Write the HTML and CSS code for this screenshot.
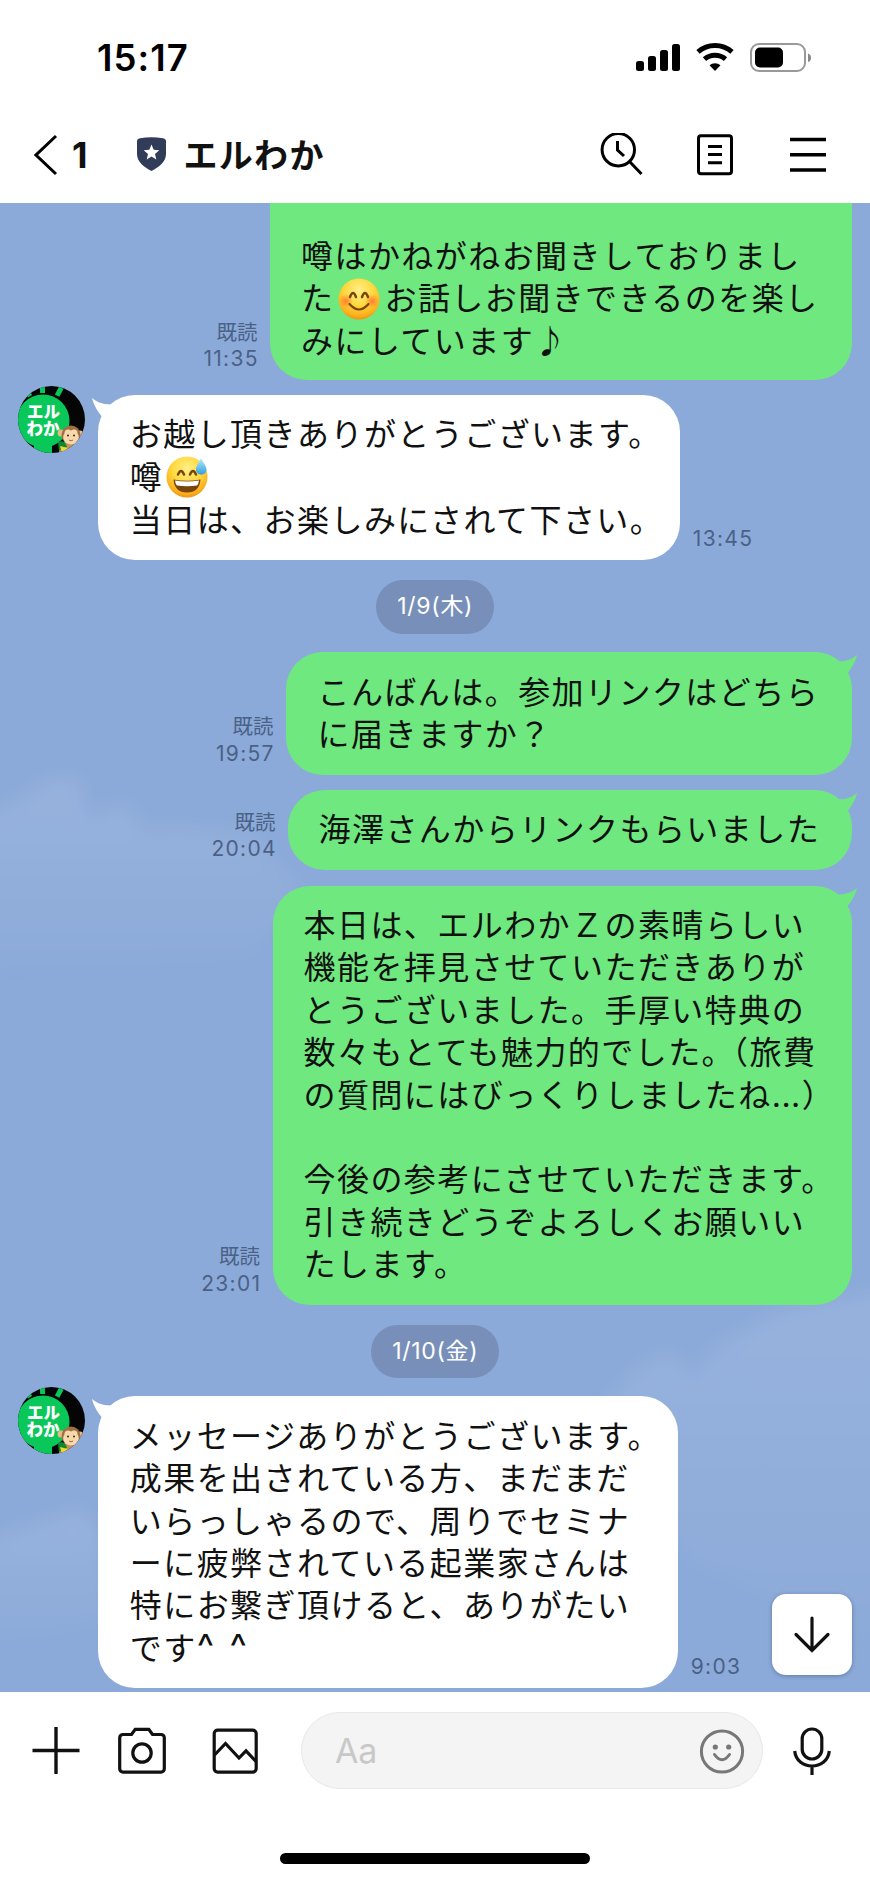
FILE: index.html
```html
<!DOCTYPE html>
<html lang="ja">
<head>
<meta charset="utf-8">
<title>エルわか</title>
<link rel="stylesheet" href="styles.css">
</head>
<body>
<svg class="defs" width="0" height="0" aria-hidden="true">
  <defs>
    <radialGradient id="face" cx="50%" cy="30%" r="72%">
      <stop offset="0" stop-color="#fff08a"/><stop offset=".5" stop-color="#ffd83e"/><stop offset=".85" stop-color="#fbae1c"/><stop offset="1" stop-color="#ee8d12"/>
    </radialGradient>
    <radialGradient id="blush"><stop offset="0" stop-color="#ff6a2c" stop-opacity=".8"/><stop offset="1" stop-color="#ff6a2c" stop-opacity="0"/></radialGradient>
    <linearGradient id="drop" x1="0" y1="0" x2="0" y2="1"><stop offset="0" stop-color="#b9ebff"/><stop offset="1" stop-color="#2f9fe0"/></linearGradient>
    <clipPath id="disc"><circle cx="33.5" cy="33.5" r="33.5"/></clipPath>
    <symbol id="avatar" viewBox="0 0 67 67">
      <g clip-path="url(#disc)">
        <rect width="67" height="67" fill="#050505"/>
        <g fill="#0ac75a">
          <rect x="22" y="-2" width="5" height="9" transform="rotate(-2 24 4)"/>
          <rect x="39" y="1" width="5" height="9" transform="rotate(28 41 5)"/>
          <rect x="8" y="4" width="5" height="7" transform="rotate(-32 10 8)"/>
          <rect x="16" y="56" width="18" height="12"/>
          <circle cx="25" cy="35" r="26.5"/>
        </g>
        <text class="avatar-text" x="9" y="31.500">エル</text>
        <text class="avatar-text" x="8.500" y="48.500">わか</text>
        <ellipse cx="51" cy="64" rx="10" ry="9" fill="#c99255"/>
        <circle cx="43" cy="47" r="3.500" fill="#e8b887"/>
        <circle cx="62" cy="48" r="3.500" fill="#e8b887"/>
        <circle cx="53" cy="49" r="9.500" fill="#a06f42"/>
        <ellipse cx="53" cy="51.500" rx="7.800" ry="7" fill="#f7d9ae"/>
        <circle cx="50" cy="47" r="3.500" fill="#f7d9ae"/><circle cx="56" cy="47" r="3.500" fill="#f7d9ae"/>
        <circle cx="50" cy="49.500" r="1" fill="#42261a"/><circle cx="56" cy="49.500" r="1" fill="#42261a"/>
        <path d="M51 54q2 1.600 4 0" fill="none" stroke="#b0603c"/>
        <path d="M40 56q7-3 9 5l-8 4z" fill="#0b8a34"/>
        <path d="M42 60l8 2-6 5z" fill="#f1d928"/>
      </g>
    </symbol>
    <symbol id="tail" viewBox="0 0 24 22">
      <path d="M0 1C6 6.500 13 7.500 22 7.500L24 22H12C6 15 2 9 0 1z"/>
    </symbol>
  </defs>
</svg>

<header class="top">
  <div class="status">
    <span class="clock">15:17</span>
    <svg class="status-icons" width="176" height="32" viewBox="0 0 176 32">
      <rect x="1" y="19" width="8" height="10" rx="2.500"/><rect x="13" y="14" width="8" height="15" rx="2.500"/><rect x="25" y="8" width="8" height="21" rx="2.500"/><rect x="37" y="2" width="8" height="27" rx="2.500"/>
      <path d="M63 9.800a26 26 0 0 1 34 0" fill="none" stroke="#000" stroke-width="5"/>
      <path d="M69.500 17.200a16 16 0 0 1 21 0" fill="none" stroke="#000" stroke-width="5"/>
      <path d="M74.500 23.200a8.500 8.500 0 0 1 11 0L80 29z"/>
      <rect x="116" y="2" width="54" height="27" rx="8" fill="#fff" stroke="#999" stroke-width="2"/>
      <rect x="120" y="5.500" width="28" height="20" rx="5"/>
      <path d="M173 11.500q3 1 3 4.300t-3 4.300z" fill="#888"/>
    </svg>
  </div>
  <nav class="bar">
    <svg class="back" width="24" height="42" viewBox="0 0 24 42"><path d="M22 2L2 21l20 19" fill="none" stroke="#000" stroke-width="3"/></svg>
    <span class="count">1</span>
    <svg class="shield" width="29" height="34" viewBox="0 0 29 34"><path d="M3 1.300Q14.500-.8 26 1.300q3 .5 3 3V17c0 8-7 13-14.500 17C7 30 0 25 0 17V4.300q0-2.500 3-3z" fill="#313c58"/><path d="M14.500 7.500l2.200 5.200 5.600.5-4.300 3.700 1.300 5.500-4.800-2.900-4.800 2.900 1.300-5.500-4.300-3.700 5.600-.5z" fill="#fff"/></svg>
    <h1 class="title">エルわか</h1>
    <svg class="act" width="44" height="44" viewBox="0 0 44 44"><circle cx="19.300" cy="16.700" r="16.200"/><path d="M18.500 8v9l6.500 6M30.500 28.500l12 12.500"/></svg>
    <svg class="act" width="44" height="44" viewBox="0 0 44 44"><rect x="5.500" y="2.700" width="33" height="38" rx="2.500"/><path d="M15 13.600h14M15 21.600h14M15 29.700h14"/></svg>
    <svg class="act" width="44" height="44" viewBox="0 0 44 44"><path d="M4 6.500h36M4 21.700h36M4 37h36" stroke-width="3.400"/></svg>
  </nav>
</header>

<main class="chat">
  <svg class="sky" width="870" height="1489" viewBox="0 203 870 1489" aria-hidden="true">
    <defs>
      <filter id="soft" x="-20%" y="-20%" width="140%" height="140%"><feGaussianBlur stdDeviation="9"/></filter>
      <linearGradient id="c1" x1="0" y1="0" x2="0" y2="1"><stop offset="0" stop-color="#fff" stop-opacity=".095"/><stop offset="1" stop-color="#fff" stop-opacity="0"/></linearGradient>
    </defs>
    <g fill="url(#c1)" filter="url(#soft)">
      <path d="M-30 820L20 800 50 780 78 780 90 818 125 804 145 830 180 828 250 835 300 890 250 960-30 980z"/>
      <path d="M900 1290L780 1312 720 1345 690 1375 670 1352 635 1370 600 1410 640 1480 690 1560 900 1660z"/>
      <path d="M-30 1545L50 1520 80 1510 100 1530 110 1620-30 1650z"/>
    </g>
  </svg>

  <div class="row out first">
    <div class="meta">既読<br><span class="time">11:35</span></div>
    <div class="bubble w-a">噂はかねがねお聞きしておりまし<br>た<svg class="emoji" width="42" height="42" viewBox="0 0 42 42"><circle cx="21" cy="21" r="20.500" fill="url(#face)"/><circle cx="8" cy="23" r="7" fill="url(#blush)"/><circle cx="34" cy="23" r="7" fill="url(#blush)"/><g fill="none" stroke="#7a4509" stroke-width="2.500" stroke-linecap="round"><path d="M12 19q3-8 6 0M24 19q3-8 6 0"/><path d="M11.500 26q9.500 11 19 0" stroke-width="2.200"/></g></svg>お話しお聞きできるのを楽し<br>みにしています♪</div>
  </div>

  <div class="row in second">
    <svg class="avatar" width="67" height="67"><use href="#avatar"/></svg>
    <div class="bubble w-b"><svg class="tail" width="24" height="22"><use href="#tail"/></svg>お越し頂きありがとうございます。<br>噂<svg class="emoji" width="42" height="42" viewBox="0 0 42 42"><circle cx="21" cy="21" r="20.500" fill="url(#face)"/><g fill="none" stroke="#7a4509" stroke-width="2.500" stroke-linecap="round"><path d="M12 18.500q3-7 6 0M24 18.500q3-7 6 0"/></g><path d="M7.500 23.500q13.500 2.500 27 0-1 13-13.500 13t-13.500-13z" fill="#7a4509"/><path d="M9 24.500q12 2.200 24 0-.5 4-2 5-10 1.500-20 0-1.500-1-2-5z" fill="#fff"/><path d="M35 2c2 5 6 8 5.500 12.500a5.400 5.400 0 0 1-10.500 0C29.500 10 33 7 35 2z" fill="url(#drop)"/></svg><br>当日は、お楽しみにされて下さい。</div>
    <div class="meta"><span class="time">13:45</span></div>
  </div>

  <div class="date date-a">1/9(木)</div>

  <div class="row out third">
    <div class="meta">既読<br><span class="time">19:57</span></div>
    <div class="bubble w-c"><svg class="tail" width="24" height="22"><use href="#tail"/></svg>こんばんは。参加リンクはどちら<br>に届きますか？</div>
  </div>

  <div class="row out next">
    <div class="meta">既読<br><span class="time">20:04</span></div>
    <div class="bubble w-d"><svg class="tail" width="24" height="22"><use href="#tail"/></svg>海澤さんからリンクもらいました</div>
  </div>

  <div class="row out next">
    <div class="meta">既読<br><span class="time">23:01</span></div>
    <div class="bubble w-e"><svg class="tail" width="24" height="22"><use href="#tail"/></svg>本日は、エルわかＺの素晴らしい<br>機能を拝見させていただきありが<br>とうございました。手厚い特典の<br>数々もとても魅力的でした。<span class="open">（</span>旅費<br>の質問にはびっくりしましたね<span class="dots">...</span>）<br><br>今後の参考にさせていただきます。<br>引き続きどうぞよろしくお願いい<br>たします。</div>
  </div>

  <div class="date date-b">1/10(金)</div>

  <div class="row in last">
    <svg class="avatar" width="67" height="67"><use href="#avatar"/></svg>
    <div class="bubble w-f"><svg class="tail" width="24" height="22"><use href="#tail"/></svg>メッセージありがとうございます。<br>成果を出されている方、まだまだ<br>いらっしゃるので、周りでセミナ<br>ーに疲弊されている起業家さんは<br>特にお繋ぎ頂けると、ありがたい<br>です<span class="caret">^ ^</span></div>
    <div class="meta"><span class="time">9:03</span></div>
  </div>

  <button class="jump" aria-label="下へ"><svg width="40" height="40" viewBox="0 0 40 40"><path d="M20 4v32.500M4 20.500l16 16 16-16" fill="none" stroke="#111" stroke-width="3.200" stroke-linecap="round"/></svg></button>
</main>

<footer class="bottom">
  <div class="tools">
    <svg class="tool" width="50" height="50" viewBox="0 0 50 50"><path d="M25 1v47M1.500 24.500h47" stroke-width="3.400"/></svg>
    <svg class="tool cam" width="50" height="50" viewBox="0 0 50 50"><path d="M6 8.500h8.500l3.700-5.200h13.600L35.500 8.500H44a3.300 3.300 0 0 1 3.300 3.300v31A3.300 3.300 0 0 1 44 46.100H6a3.300 3.300 0 0 1-3.300-3.300v-31A3.300 3.300 0 0 1 6 8.500z"/><circle cx="25" cy="27" r="9.200"/></svg>
    <svg class="tool pic" width="50" height="50" viewBox="0 0 50 50"><rect x="4.200" y="4.100" width="42" height="42" rx="3.500"/><path d="M4.500 29L15.500 17.500 29 32l7-7.200L46 35.500"/></svg>
    <div class="field"><span class="hint">Aa</span><svg width="46" height="46" viewBox="0 0 46 46"><circle cx="23" cy="23.500" r="20.600" fill="none" stroke="#777" stroke-width="3"/><circle cx="16.300" cy="19" r="2.600" fill="#777"/><circle cx="29.700" cy="19" r="2.600" fill="#777"/><path d="M15.500 26.500q7.500 10.500 15 0" fill="none" stroke="#777" stroke-width="3" stroke-linecap="round"/></svg></div>
    <svg class="tool mic" width="50" height="50" viewBox="0 0 50 50"><rect x="15.200" y="3" width="19.600" height="30" rx="9.800"/><path d="M7.700 25c2 20 32.600 20 34.600 0M25 40v9" stroke-width="3.200"/></svg>
  </div>
  <div class="home"></div>
</footer>
</body>
</html>
```
FILE: styles.css
```css
* { box-sizing: border-box; }
body {
  margin: 0;
  width: 870px;
  height: 1882px;
  overflow: hidden;
  display: flex;
  flex-direction: column;
  background: #fff;
  color: #111;
  font-family: "Inter", "Noto Sans CJK JP", sans-serif;
}
svg { display: block; flex: none; }
.defs { position: absolute; }

/* status bar and title bar */
.top { height: 203px; flex: none; }
.status {
  height: 104px;
  padding: 26px 59px 0 97px;
  display: flex;
  align-items: center;
  justify-content: space-between;
}
.status-icons { margin-top: -14px; }
.clock { margin-top: -14px; font-size: 36.500px; font-weight: 600; letter-spacing: 1.100px; color: #000; }
.bar { height: 102px; padding: 0 40px 0 34px; display: flex; align-items: center; }
.count { margin-left: 14px; width: 17px; font-size: 36px; font-weight: 700; }
.shield { margin-left: 48px; margin-top: -2px; }
.title {
  margin: -3px auto 0 17.500px;
  font: 700 34px/50px "Noto Sans CJK JP", sans-serif;
  letter-spacing: 1.300px;
}
.act { margin-left: 49.500px; fill: none; stroke: #000; stroke-width: 3; }

/* conversation */
.chat {
  position: relative;
  height: 1489px;
  flex: none;
  overflow: hidden;
  background: #8caad9;
}
.sky { position: absolute; left: 0; top: 0; }
.row { position: relative; display: flex; align-items: flex-end; }
.out { justify-content: flex-end; padding-right: 18px; }
.in { padding-left: 18px; }
.bubble {
  position: relative;
  flex: none;
  padding: 16.400px 0 21.200px 31.500px;
  border-radius: 37px;
  background: #fff;
  font-family: "Noto Sans CJK JP", sans-serif;
  font-size: 32px;
  letter-spacing: 1.440px;
  line-height: 42.400px;
  white-space: nowrap;
  text-spacing-trim: space-all;
}
.out .bubble { background: #6fe87f; }
.in .bubble { margin-left: 13.300px; }
.tail { position: absolute; left: -6.500px; top: 1.500px; fill: #fff; }
.out .tail { left: auto; right: -5px; transform: scaleX(-1); fill: #6fe87f; }
.avatar { align-self: flex-start; margin-top: -9px; }
.avatar-text { font: 900 16.500px "Noto Sans CJK JP", sans-serif; fill: #fff; }

.first .bubble { height: 177px; padding-top: 29.600px; border-radius: 0 0 37px 37px; }
.second { margin-top: 15px; }
.third { margin-top: 18.300px; }
.next { margin-top: 15.500px; }
.last { margin-top: 18px; }
.w-a { width: 582px; }
.w-b { width: 582px; }
.w-c { width: 566px; }
.w-d { width: 564px; }
.w-e { width: 579.500px; }
.w-f { width: 580px; }
.bubble.w-a, .bubble.w-e { padding-left: 31px; }
.bubble.w-d { padding-left: 30.500px; }

.emoji { display: inline-block; vertical-align: -8px; margin: -8px 4.500px -8px 3.500px; position: relative; top: -6.500px; }
.in .emoji { margin-left: 2.500px; }
.open { margin-left: -3px; letter-spacing: 1.500px; font-feature-settings: "halt"; }
.dots { padding-right: 1px; letter-spacing: 0.500px; line-height: 0; font-family: "Inter", sans-serif; }
.caret { line-height: 0; font-family: "Inter", sans-serif; font-size: 37px; letter-spacing: 2.500px; }

.meta {
  margin: 0 12.500px 7.500px;
  font-size: 20.500px;
  line-height: 26.500px;
  color: #4a6186;
  text-align: right;
}
.time { font-size: 21px; letter-spacing: 1.300px; }
.out .time { margin-right: -1.300px; }

.date {
  position: relative;
  width: fit-content;
  height: 53.500px;
  margin: 20px auto 0;
  padding: 0 20.500px 0 21px;
  border-radius: 26.750px;
  background: #7890b9;
  color: #fff;
  font-size: 23px;
  line-height: 53px;
  letter-spacing: 0.700px;
}

.jump {
  position: absolute;
  right: 18px;
  bottom: 17.500px;
  width: 80.500px;
  height: 80.500px;
  padding: 0;
  border: 0;
  border-radius: 14px;
  background: #fff;
  box-shadow: 0 1px 4px rgba(30, 50, 90, 0.4);
  display: grid;
  place-items: center;
}

/* composer */
.bottom { height: 190px; flex: none; padding-top: 20px; }
.tools { height: 77px; padding: 0 33px 0 31px; display: flex; align-items: center; }
.tool { fill: none; stroke: #111; stroke-width: 3.200; }
.cam { margin-left: 36px; }
.pic { margin-left: 43px; }
.field {
  margin: 0 24px 0 41px;
  width: 462px;
  height: 77px;
  padding: 0 17px 0 33px;
  border: 1.500px solid #e8e8e8;
  border-radius: 38.500px;
  background: #f4f4f4;
  display: flex;
  align-items: center;
  justify-content: space-between;
}
.hint { font-size: 34px; font-weight: 400; color: #c8c8c8; letter-spacing: -0.300px; }
.home { width: 310px; height: 11px; margin: 64px auto 0; border-radius: 6px; background: #000; }
```
